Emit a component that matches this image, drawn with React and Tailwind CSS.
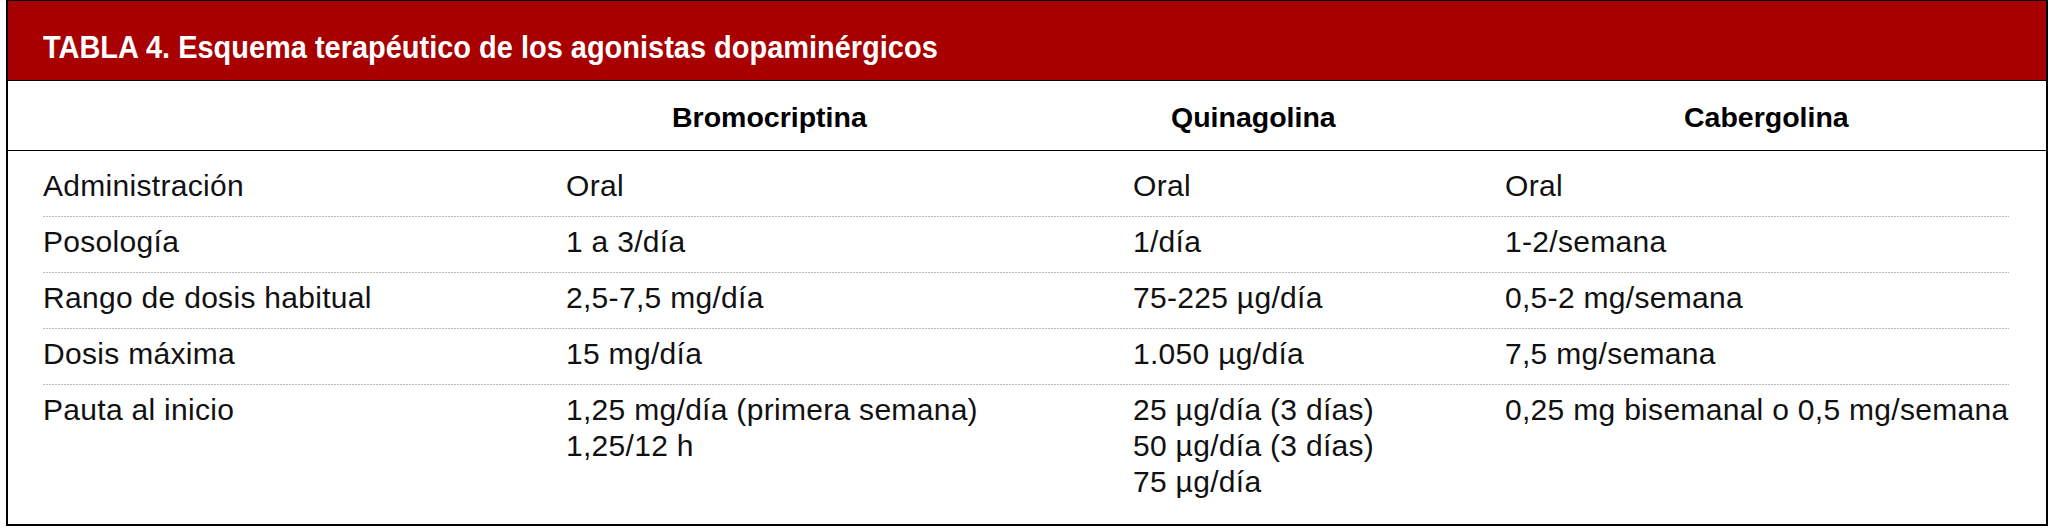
import React from 'react';

const rows = [
  { label: 'Administración', cells: [['Oral'], ['Oral'], ['Oral']] },
  { label: 'Posología', cells: [['1 a 3/día'], ['1/día'], ['1-2/semana']] },
  { label: 'Rango de dosis habitual', cells: [['2,5-7,5 mg/día'], ['75-225 µg/día'], ['0,5-2 mg/semana']] },
  { label: 'Dosis máxima', cells: [['15 mg/día'], ['1.050 µg/día'], ['7,5 mg/semana']] },
  {
    label: 'Pauta al inicio',
    cells: [
      ['1,25 mg/día (primera semana)', '1,25/12 h'],
      ['25 µg/día (3 días)', '50 µg/día (3 días)', '75 µg/día'],
      ['0,25 mg bisemanal o 0,5 mg/semana'],
    ],
    last: true,
  },
];

const bold = "font-['Liberation_Sans',Arial,sans-serif] font-bold";

const Row = ({ label, cells, last }) => (
  <div
    className={
      'grid grid-cols-[523px_567px_372px_1fr] pt-[7px] ' +
      (last
        ? 'pb-[12px]'
        : 'pb-[13px] bg-[linear-gradient(to_right,#777_1px,transparent_1px)] bg-[length:3px_1px] bg-bottom bg-repeat-x')
    }
  >
    <div>{label}</div>
    {cells.map((lines, i) => (
      <div key={i}>
        {lines.map((l) => (
          <div key={l}>{l}</div>
        ))}
      </div>
    ))}
  </div>
);

export default function App() {
  return (
    <div className="w-[2052px] h-[528px] bg-white pl-[6px]">
      <div className="w-[2042px] h-[526px] border-2 border-t border-black flex flex-col">
        <div className="h-[80px] bg-[#a80000] border-b border-black pl-[35px] pt-[30px]">
          <h1 className={bold + ' inline-block origin-left scale-x-[0.905] text-white text-[32px] leading-[32px] whitespace-nowrap'}>
            TABLA 4. Esquema terapéutico de los agonistas dopaminérgicos
          </h1>
        </div>

        <div className={bold + ' h-[70px] border-b border-black grid grid-cols-[558px_567px_372px_1fr] pt-[22px] text-[28.5px] leading-[28px] text-black'}>
          <div />
          <div className="pl-[106px]">Bromocriptina</div>
          <div className="pl-[38px]">Quinagolina</div>
          <div className="pl-[179px]">Cabergolina</div>
        </div>

        <div className="flex-1 pl-[35px] pr-[37px] pt-[10px] font-['Liberation_Sans',Arial,sans-serif] text-[30px] leading-[36px] tracking-[0.3px] text-[#111]">
          {rows.map((r) => (
            <Row key={r.label} {...r} />
          ))}
        </div>
      </div>
    </div>
  );
}
